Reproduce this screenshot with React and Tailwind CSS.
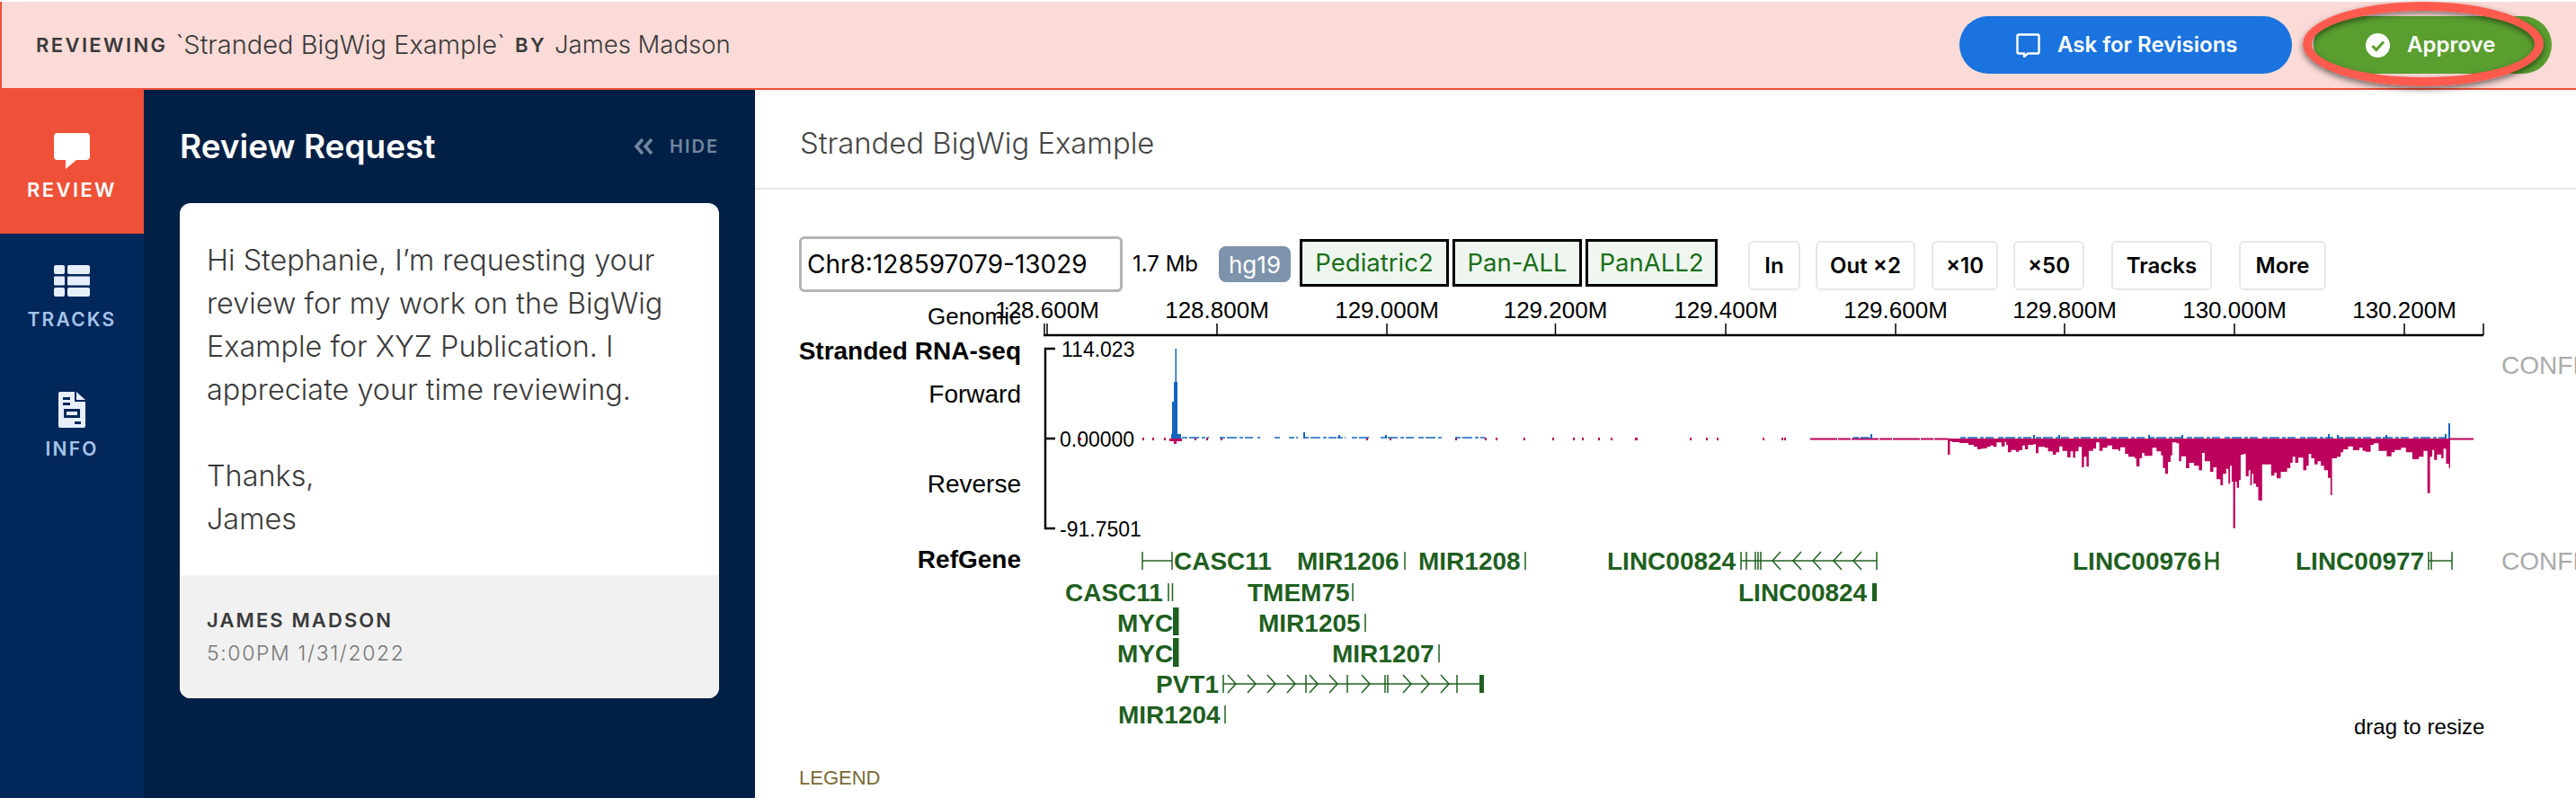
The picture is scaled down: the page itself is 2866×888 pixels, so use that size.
const TICKS = [
  { x: 1165, label: '128.600M' }, { x: 1354, label: '128.800M' }, { x: 1543, label: '129.000M' },
  { x: 1730.5, label: '129.200M' }, { x: 1920, label: '129.400M' }, { x: 2109, label: '129.600M' },
  { x: 2297, label: '129.800M' }, { x: 2486, label: '130.000M' }, { x: 2675, label: '130.200M' },
]

// reverse strand envelope, [x in zoomed crop, y in zoomed crop]
const REVERSE = [
  [0,180],[10,178],[20,177],[30,172],[40,167],[50,172],[60,157],[70,157],[75,170],[85,155],[90,165],[95,190],[105,182],[120,188],[130,183],[140,167],[148,180],[158,165],[175,163],[182,193],[190,172],[210,175],[220,187],[235,198],[245,190],[255,170],[265,185],[280,207],[290,187],[298,208],[305,187],[315,172],[325,240],[332,205],[340,238],[347,185],[360,178],[370,157],[380,185],[390,175],[405,167],[420,180],[440,185],[445,173],[460,195],[470,205],[490,210],[495,237],[505,210],[513,192],[520,202],[545,175],[558,187],[572,200],[578,242],[585,262],[594,222],[602,200],[607,157],[620,160],[628,220],[635,203],[650,243],[660,225],[675,235],[690,250],[700,192],[708,220],[725,255],[735,240],[745,280],[757,300],[765,262],[775,245],[782,295],[787,235],[792,288],[797,443],[803,288],[808,308],[815,283],[820,198],[828,195],[836,270],[845,250],[850,300],[855,262],[860,295],[868,305],[875,350],[882,352],[887,230],[905,230],[915,268],[925,258],[932,277],[945,255],[965,243],[975,225],[982,205],[990,225],[1000,208],[1015,250],[1025,235],[1032,195],[1040,210],[1050,230],[1060,220],[1070,235],[1080,250],[1092,275],[1100,333],[1105,210],[1120,205],[1132,190],[1140,180],[1155,170],[1170,183],[1190,175],[1200,185],[1210,188],[1225,165],[1235,160],[1250,185],[1265,185],[1275,203],[1290,190],[1300,182],[1320,175],[1335,190],[1355,213],[1375,205],[1390,185],[1402,326],[1410,205],[1417,182],[1423,215],[1432,197],[1445,210],[1452,178],[1460,228],[1469,242],
]

const LEAD_IN = [[2167,506],[2169.5,491],[2172,492],[2180,493],[2190,495],[2196,497]]

const reversePath = () => {
  const pts = [...LEAD_IN, ...REVERSE.map(([u, v]) => [2200 + u / 2.8, 440 + v / 3])]
  let d = 'M2167 488'
  pts.forEach(([x, y], i) => {
    d += ` L${x.toFixed(1)} ${y.toFixed(1)}`
    const next = pts[i + 1] ? pts[i + 1][0] : 2726
    d += ` L${next.toFixed(1)} ${y.toFixed(1)}`
  })
  return d + ' L2726 488 Z'
}

const PINK_DOTS = [1201,1271,1282,1295,1329,1342,1358,1520,1546,1619,1652,1664,1695,1727,1750,1760,1778,1792,1819,1820,1880,1898,1910,1961,1982,1985]
const BLUE_RUNS = [
  [1315,1345],[1357,1402],[1418,1424],[1434,1444],[1450,1488],[1488,1497],
  [1504,1523],[1536,1606],[1619,1652],[2062,2080],[2181,2725],
]
const BLUE_BUMPS = [[1450,481],[1489,484],[1541,484],[2081,483],[2262,484],[2290,484],[2390,484],[2427,484],[2590,483],[2600,484],[2654,484],[2720,483]]

const GENE_LABELS = [
  { t: 'CASC11', x: 1306, row: 0 }, { t: 'MIR1206', x: 1443, row: 0 }, { t: 'MIR1208', x: 1578, row: 0 },
  { t: 'LINC00824', x: 1788, row: 0 }, { t: 'LINC00976', x: 2306, row: 0 }, { t: 'LINC00977', x: 2554, row: 0 },
  { t: 'CASC11', x: 1185, row: 1 }, { t: 'TMEM75', x: 1388, row: 1 }, { t: 'LINC00824', x: 1934, row: 1 },
  { t: 'MYC', x: 1243, row: 2 }, { t: 'MIR1205', x: 1400, row: 2 },
  { t: 'MYC', x: 1243, row: 3 }, { t: 'MIR1207', x: 1482, row: 3 },
  { t: 'PVT1', x: 1286, row: 4 }, { t: 'MIR1204', x: 1244, row: 5 },
]
const ROW_Y = [624, 659, 693, 727, 761, 795]

const GENE_TICKS = [
  [0,1271],[0,1304],[0,1563],[0,1697],[0,1937],[0,1943],[0,1953],[0,1956],[0,1959],[0,2088],
  [0,2702],[0,2705],[0,2728],
  [1,1300],[1,1304.5],[1,1505],[2,1519],[3,1601],
  [4,1361],[4,1453],[4,1499],[4,1541],[4,1544],[4,1621],[5,1363],
]
const GENE_LINES = [[0,1271,1304],[0,1937,2088],[0,2702,2728],[4,1361,1651]]
const CHEV_LEFT = [1972, 1995, 2017, 2040, 2062]
const CHEV_RIGHT = [1371, 1393, 1415, 1437, 1462, 1484, 1520, 1566, 1586, 1608]

const TOOLBAR_BTNS = [
  { t: 'In', c: 'ml-[34px] w-[58px]' },
  { t: 'Out ×2', c: 'ml-[17px] w-[111px]' },
  { t: '×10', c: 'ml-[18px] w-[74px]' },
  { t: '×50', c: 'ml-[17px] w-[79px]' },
  { t: 'Tracks', c: 'ml-[30px] w-[112px]' },
  { t: 'More', c: 'ml-[30px] w-[97px]' },
]

function GenomeChart() {
  return (
    <svg viewBox="840 330 2026 520" className="block w-[2026px] h-[520px] font-['Liberation_Sans',Arial,sans-serif]">
      {/* ruler */}
      <path d="M1161 373H2763" stroke="#000" strokeWidth="2.5" />
      <path d="M1162 360V373M2763 360V373" stroke="#000" strokeWidth="1.5" />
      {TICKS.map(t => (
        <g key={t.label}>
          <path d={`M${t.x} 360V373`} stroke="#000" strokeWidth="1.5" />
          <text x={t.x} y={354} textAnchor="middle" fontSize="26" fill="#000">{t.label}</text>
        </g>
      ))}
      <text x="1136" y="361" textAnchor="end" fontSize="26" fill="#000">Genomic</text>

      {/* stranded track labels */}
      <text x="1136" y="400" textAnchor="end" fontSize="28" fontWeight="700" fill="#000">Stranded RNA-seq</text>
      <text x="1136" y="448" textAnchor="end" fontSize="28" fill="#000">Forward</text>
      <text x="1136" y="548" textAnchor="end" fontSize="28" fill="#000">Reverse</text>

      <path d="M1174 388H1163V588H1174M1163 488H1174" stroke="#000" strokeWidth="2.5" fill="none" />
      <text x="1181" y="397" fontSize="23" fill="#000">114.023</text>
      <text x="1179" y="497" fontSize="23" fill="#000">0.00000</text>
      <text x="1179" y="597" fontSize="23" fill="#000">-91.7501</text>

      {/* signal */}
      <path d={reversePath()} fill="#bc025c" />
      <path d="M2014 488.5H2167M2726 488.5H2752" stroke="#bc025c" strokeWidth="2" strokeDasharray="30 1 14 1" />
      {PINK_DOTS.map(x => <rect key={x} x={x} y={487} width="2" height="3" fill="#bc025c" />)}
      <rect x="1301" y="488" width="14" height="3" fill="#bc025c" />
      <rect x="1306" y="488" width="3" height="6" fill="#bc025c" />
      {BLUE_RUNS.map(([a, b]) => (
        <path key={a} d={`M${a} 487H${b}`} stroke="#1565c0" strokeWidth="1.5" strokeDasharray="6 2 11 3 4 2 9 5" />
      ))}
      {BLUE_BUMPS.map(([x, y]) => <rect key={x} x={x} y={y} width="2" height={488 - y} fill="#1565c0" />)}
      <path d="M1304 488V447H1306V425H1307.5V388H1309V425H1310V484L1314 488Z" fill="#1565c0" />
      <rect x="1303" y="483" width="11" height="5" fill="#1565c0" />
      <rect x="2724" y="471" width="2" height="17" fill="#1565c0" />

      <text x="2783" y="416" fontSize="28" fill="#aaa">CONFIGURE</text>
      <text x="2783" y="634" fontSize="28" fill="#aaa">CONFIGURE</text>

      {/* genes */}
      <text x="1136" y="632" textAnchor="end" fontSize="28" fontWeight="700" fill="#000">RefGene</text>
      {GENE_LABELS.map((g, i) => (
        <text key={i} x={g.x} y={ROW_Y[g.row] + 10} fontSize="28" fontWeight="700" fill="#1f5f1f">{g.t}</text>
      ))}
      <g stroke="#1f5f1f" fill="none">
        {GENE_TICKS.map(([row, x], i) => <path key={i} d={`M${x} ${ROW_Y[row] - 10}V${ROW_Y[row] + 10}`} strokeWidth="1.5" />)}
        {GENE_LINES.map(([row, a, b], i) => <path key={i} d={`M${a} ${ROW_Y[row]}H${b}`} strokeWidth="1.5" />)}
        {CHEV_LEFT.map(x => <path key={x} d={`M${x + 9} ${ROW_Y[0] - 10}L${x} ${ROW_Y[0]}L${x + 9} ${ROW_Y[0] + 10}`} strokeWidth="1.5" />)}
        {CHEV_RIGHT.map(x => <path key={x} d={`M${x - 5} ${ROW_Y[4] - 10}L${x + 4} ${ROW_Y[4]}L${x - 5} ${ROW_Y[4] + 10}`} strokeWidth="1.5" />)}
        <path d="M2455 614V634M2467 614V634M2455 624H2467" strokeWidth="3" />
      </g>
      <g fill="#1f5f1f">
        <rect x="1305" y="676" width="6.5" height="31" />
        <rect x="1305" y="710" width="6.5" height="32" />
        <rect x="1646" y="751" width="5" height="20" />
        <rect x="2083" y="649" width="5" height="20" />
      </g>

      <text x="2619" y="817" fontSize="24" fill="#000">drag to resize</text>
    </svg>
  )
}

export default function App() {
  return (
    <div className="w-[2866px] h-[888px] overflow-hidden bg-white pt-[2px] flex flex-col font-['Inter',sans-serif]">
      {/* Review banner */}
      <div className="relative h-[98px] shrink-0 bg-[#fbdbd7] border-l-2 border-b-2 border-[#ee5138] flex items-center pl-[38px] pr-[27px] text-[#3a3a3a]">
        <span className="text-[22px] font-semibold tracking-[2.4px]">REVIEWING</span>
        <span className="ml-[9px] text-[29px] font-light">`Stranded BigWig Example`</span>
        <span className="ml-[11px] text-[22px] font-semibold tracking-[2.4px]">BY</span>
        <span className="ml-[9px] text-[27.5px] font-light">James Madson</span>

        <button className="ml-auto w-[370px] h-[64px] rounded-full bg-[#1a73de] text-white text-[24px] font-semibold flex items-center pl-[63px]">
          <svg width="27" height="27" viewBox="0 0 27 27" fill="none" stroke="currentColor" strokeWidth="2.4" strokeLinejoin="round">
            <path d="M3 1.5H24A1.5 1.5 0 0 1 25.5 3V21A1.5 1.5 0 0 1 24 22.5H13L9 26V22.5H3A1.5 1.5 0 0 1 1.5 21V3A1.5 1.5 0 0 1 3 1.5Z" />
          </svg>
          <span className="ml-[19px]">Ask for Revisions</span>
        </button>
        <button className="ml-[24px] w-[265px] h-[64px] rounded-full bg-[#5a9e2f] text-white text-[24px] font-semibold flex items-center pl-[58px]">
          <svg width="27" height="27" viewBox="0 0 27 27">
            <circle cx="13.5" cy="13.5" r="13.5" fill="#fff" />
            <path d="M7.5 14L11.8 18.5L20 9.5" fill="none" stroke="#5a9e2f" strokeWidth="3.2" />
          </svg>
          <span className="ml-[19px]">Approve</span>
        </button>
        {/* hand-drawn highlight ring */}
        <div className="absolute left-[2560px] top-[0px] w-[268px] h-[94px] rounded-[50%] border-[10px] border-[#ff5a4e] shadow-[0_3px_7px_rgba(0,0,0,0.55),inset_0_3px_6px_rgba(0,0,0,0.5)]" />
      </div>

      <div className="flex flex-1 min-h-0">
        {/* Icon nav */}
        <nav className="w-[160px] shrink-0 bg-[#02275a] flex flex-col items-center text-[#a5c4ea] text-[21px] font-semibold tracking-[2.2px]">
          <div className="w-full h-[160px] bg-[#ee5138] text-white flex flex-col items-center pt-[48px]">
            <svg width="40" height="40" viewBox="0 0 40 40" fill="#fff">
              <path d="M4 0H36A4 4 0 0 1 40 4V26A4 4 0 0 1 36 30H25L13 40V30H4A4 4 0 0 1 0 26V4A4 4 0 0 1 4 0Z" />
            </svg>
            <span className="mt-[7px] text-[22px] tracking-[2.4px]">REVIEW</span>
          </div>
          <div className="flex flex-col items-center pt-[35px] h-[136px]">
            <svg width="40" height="35" viewBox="0 0 40 35" fill="#e6eefa">
              <rect width="12" height="10" rx="2" />
              <rect x="15" width="25" height="10" rx="2" />
              <rect y="12.5" width="12" height="10" rx="1" />
              <rect x="15" y="12.5" width="25" height="10" rx="1" />
              <rect y="25" width="12" height="10" rx="2" />
              <rect x="15" y="25" width="25" height="10" rx="2" />
            </svg>
            <span className="mt-[10px]">TRACKS</span>
          </div>
          <div className="flex flex-col items-center">
            <svg width="30" height="40" viewBox="0 0 30 40" fill="#e6eefa" className="mt-[40px]">
              <path fillRule="evenodd" d="M2 0H18V11H30V38A2 2 0 0 1 28 40H2A2 2 0 0 1 0 38V2A2 2 0 0 1 2 0ZM5 6V9H13V6ZM5 12V15H13V12ZM6 19V29H24V19ZM9 22H21V26H9ZM18 33V36H25V33Z" />
              <path d="M20 0L30 9H20Z" />
            </svg>
            <span className="mt-[8px]">INFO</span>
          </div>
        </nav>

        {/* Review panel */}
        <aside className="w-[680px] shrink-0 bg-[#022046] px-[40px] pt-[40px]">
          <div className="flex items-center justify-between h-[46px]">
            <span className="text-white text-[37px] font-semibold">Review Request</span>
            <span className="flex items-center text-[#73879f] text-[20px] font-semibold tracking-[2px]">
              <svg width="22" height="18" viewBox="0 0 22 18" fill="none" stroke="currentColor" strokeWidth="3.6">
                <path d="M10 1L3 9L10 17M20 1L13 9L20 17" />
              </svg>
              <span className="ml-[18px]">HIDE</span>
            </span>
          </div>
          <div className="mt-[40px] w-[600px] rounded-[12px] bg-white overflow-hidden text-[#3a3a3a]">
            <div className="h-[414px] px-[30px] pt-[40px] text-[32.4px] leading-[48px] font-light">
              <p>Hi Stephanie, I’m requesting your review for my work on the BigWig Example for XYZ Publication. I appreciate your time reviewing.</p>
              <p className="mt-[48px]">Thanks,<br />James</p>
            </div>
            <div className="h-[137px] bg-[#f1f1f1] px-[30px] pt-[36px]">
              <div className="text-[22px] leading-[28px] font-semibold tracking-[2.1px]">JAMES MADSON</div>
              <div className="mt-[9px] text-[23px] leading-[28px] font-light tracking-[1.6px] text-[#777]">5:00PM 1/31/2022</div>
            </div>
          </div>
        </aside>

        {/* Main */}
        <main className="flex-1 min-w-0">
          <div className="h-[111px] border-b-2 border-[#e5e5e5] pl-[50px] flex items-center pt-[10px] text-[32.8px] font-light text-[#444]">
            Stranded BigWig Example
          </div>
          <div className="mt-[52px] h-[62px] pl-[49px] flex items-center">
            <input
              readOnly
              value="Chr8:128597079-130293"
              className="w-[360px] h-[62px] border-[3px] border-[#b4b4b4] rounded-[6px] pl-[6px] pr-[37px] text-[28px] text-black outline-none"
            />
            <span className="ml-[11px] w-[96px] text-[24px] text-black">1.7 Mb</span>
            <span className="w-[80px] h-[40px] rounded-[8px] bg-[#7d93ab] text-white text-[26px] flex items-center justify-center">hg19</span>
            <div className="flex gap-[4px] ml-[10px] mb-[3px] text-[27.5px] text-[#1a6f1a]">
              <span className="w-[166px] h-[53px] border-[3px] border-black bg-[#eff6ef] flex items-center justify-center">Pediatric2</span>
              <span className="w-[144px] h-[53px] border-[3px] border-black bg-[#eff6ef] flex items-center justify-center">Pan-ALL</span>
              <span className="w-[147px] h-[53px] border-[3px] border-black bg-[#eff6ef] flex items-center justify-center">PanALL2</span>
            </div>
            {TOOLBAR_BTNS.map(b => (
              <button key={b.t} className={`${b.c} h-[55px] mt-[3px] rounded-[6px] border-2 border-[#e6e6ec] text-[24px] font-semibold text-black flex items-center justify-center`}>
                {b.t}
              </button>
            ))}
          </div>
          <div className="mt-[5px]">
            <GenomeChart />
          </div>
          <div className="mt-[4px] pl-[49px] text-[22px] leading-[24px] text-[#7a6a35] font-['Liberation_Sans',sans-serif]">LEGEND</div>
        </main>
      </div>
    </div>
  )
}
